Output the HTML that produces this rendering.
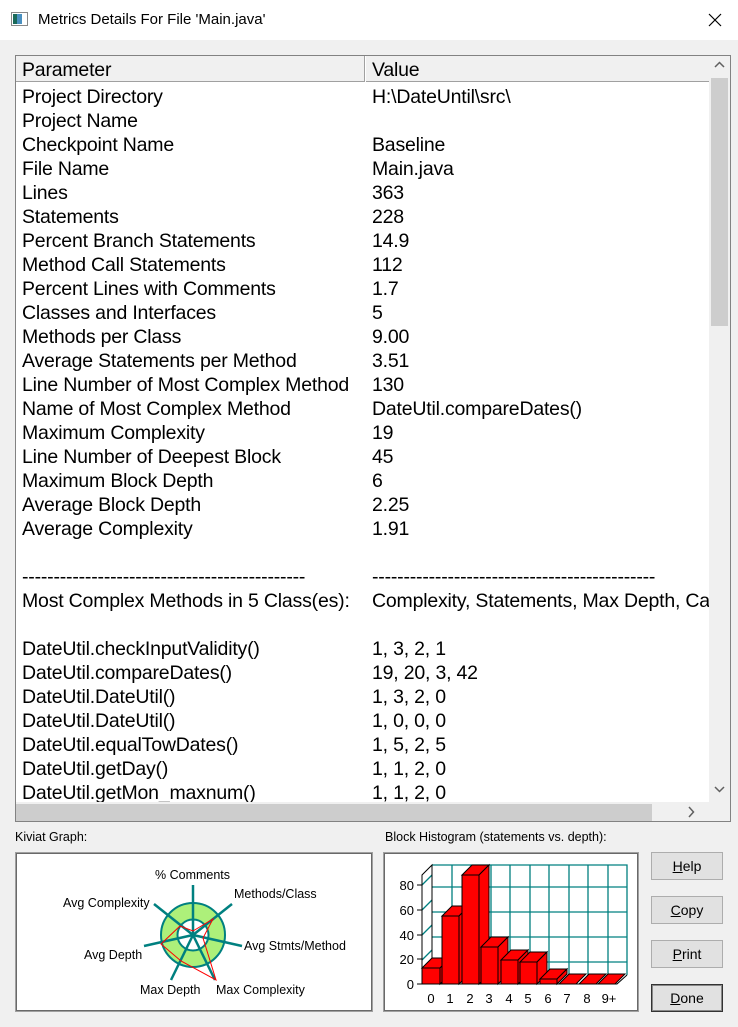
<!DOCTYPE html>
<html><head><meta charset="utf-8"><style>
*{margin:0;padding:0;box-sizing:border-box}
body{width:738px;height:1027px;background:#f0f0f0;font-family:"Liberation Sans",Arial,sans-serif;position:relative;overflow:hidden}
.title{position:absolute;left:0;top:0;width:738px;height:40px;background:#fff;font-size:15px}
.title .t{position:absolute;left:38px;top:11px}
.list{position:absolute;left:15px;top:55px;width:716px;height:767px;background:#fff;border:1px solid #828282;overflow:hidden}
.hdr{position:absolute;left:0;top:0;width:694px;height:26px;background:#f0f0f0;border-bottom:1px solid #a0a0a0}
.row{position:absolute;left:6px;font-size:19.5px;white-space:nowrap;color:#000;line-height:24px;letter-spacing:-0.2px}
.v{position:absolute;left:350px}
.vs{position:absolute;left:693px;top:0;width:21px;height:747px;background:#f0f0f0}
.hs{position:absolute;left:0;top:746px;width:693px;height:20px;background:#f0f0f0}
.lab{position:absolute;font-size:12.5px;color:#000}
.btn{position:absolute;left:651px;width:72px;height:28px;background:#e1e1e1;border:1px solid #adadad;font-size:14px;text-align:center;line-height:26px}
</style></head><body>
<div class="title">
<svg style="position:absolute;left:11px;top:12px" width="18" height="15"><rect x="0.5" y="0.5" width="16" height="13" fill="#fff" stroke="#888"/><rect x="2" y="2" width="4" height="10" fill="#1a6a5a"/><rect x="6" y="2" width="5" height="10" fill="#4a90c0"/></svg>
<span class="t">Metrics Details For File 'Main.java'</span>
<svg style="position:absolute;left:708px;top:13px" width="14" height="14"><path d="M1 1L13 13M13 1L1 13" stroke="#000" stroke-width="1.2"/></svg>
</div>
<div class="list">
<div class="hdr"><div style="position:absolute;left:348px;top:0;width:2px;height:26px;border-left:1px solid #a0a0a0;border-right:1px solid #fff"></div></div>
<div class="row" style="top:2px">Parameter<span class="v">Value</span></div>
<div class="row" style="top:29px">Project Directory<span class="v">H:\DateUntil\src\</span></div>
<div class="row" style="top:53px">Project Name</div>
<div class="row" style="top:77px">Checkpoint Name<span class="v">Baseline</span></div>
<div class="row" style="top:101px">File Name<span class="v">Main.java</span></div>
<div class="row" style="top:125px">Lines<span class="v">363</span></div>
<div class="row" style="top:149px">Statements<span class="v">228</span></div>
<div class="row" style="top:173px">Percent Branch Statements<span class="v">14.9</span></div>
<div class="row" style="top:197px">Method Call Statements<span class="v">112</span></div>
<div class="row" style="top:221px">Percent Lines with Comments<span class="v">1.7</span></div>
<div class="row" style="top:245px">Classes and Interfaces<span class="v">5</span></div>
<div class="row" style="top:269px">Methods per Class<span class="v">9.00</span></div>
<div class="row" style="top:293px">Average Statements per Method<span class="v">3.51</span></div>
<div class="row" style="top:317px">Line Number of Most Complex Method<span class="v">130</span></div>
<div class="row" style="top:341px">Name of Most Complex Method<span class="v">DateUtil.compareDates()</span></div>
<div class="row" style="top:365px">Maximum Complexity<span class="v">19</span></div>
<div class="row" style="top:389px">Line Number of Deepest Block<span class="v">45</span></div>
<div class="row" style="top:413px">Maximum Block Depth<span class="v">6</span></div>
<div class="row" style="top:437px">Average Block Depth<span class="v">2.25</span></div>
<div class="row" style="top:461px">Average Complexity<span class="v">1.91</span></div>
<div class="row" style="top:509px">---------------------------------------------<span class="v">---------------------------------------------</span></div>
<div class="row" style="top:533px">Most Complex Methods in 5 Class(es):<span class="v">Complexity, Statements, Max Depth, Calls</span></div>
<div class="row" style="top:581px">DateUtil.checkInputValidity()<span class="v">1, 3, 2, 1</span></div>
<div class="row" style="top:605px">DateUtil.compareDates()<span class="v">19, 20, 3, 42</span></div>
<div class="row" style="top:629px">DateUtil.DateUtil()<span class="v">1, 3, 2, 0</span></div>
<div class="row" style="top:653px">DateUtil.DateUtil()<span class="v">1, 0, 0, 0</span></div>
<div class="row" style="top:677px">DateUtil.equalTowDates()<span class="v">1, 5, 2, 5</span></div>
<div class="row" style="top:701px">DateUtil.getDay()<span class="v">1, 1, 2, 0</span></div>
<div class="row" style="top:725px">DateUtil.getMon_maxnum()<span class="v">1, 1, 2, 0</span></div>
<div class="vs"><div style="position:absolute;left:2px;top:22px;width:17px;height:248px;background:#cdcdcd"></div>
<svg style="position:absolute;left:5px;top:5px" width="11" height="8"><path d="M1 6L5.5 1.5L10 6" fill="none" stroke="#606060" stroke-width="1.5"/></svg>
<svg style="position:absolute;left:5px;top:729px" width="11" height="8"><path d="M1 2L5.5 6.5L10 2" fill="none" stroke="#606060" stroke-width="1.5"/></svg></div>
<div class="hs"><div style="position:absolute;left:0;top:2px;width:636px;height:18px;background:#cdcdcd"></div>
<svg style="position:absolute;left:671px;top:4px" width="8" height="12"><path d="M2 1L6.5 6L2 11" fill="none" stroke="#606060" stroke-width="1.5"/></svg></div>
<div style="position:absolute;left:693px;top:746px;width:21px;height:20px;background:#f0f0f0"></div>
</div>
<div class="lab" style="left:15px;top:830px">Kiviat Graph:</div>
<div class="lab" style="left:385px;top:830px">Block Histogram (statements vs. depth):</div>
<svg style="position:absolute;left:15px;top:852px" width="358" height="160">
<rect x="0.5" y="0.5" width="357" height="159" fill="#fff" stroke="#a0a0a0"/>
<rect x="1.5" y="1.5" width="355" height="157" fill="none" stroke="#696969"/>
<g transform="translate(178,83)">
<circle r="24" fill="none" stroke="#adf07a" stroke-width="17"/>
<circle r="32" fill="none" stroke="#008080" stroke-width="2"/>
<circle r="15.5" fill="none" stroke="#008080" stroke-width="2"/>
<g stroke="#008080" stroke-width="2.5">
<line x1="0" y1="0" x2="0" y2="-50"/>
<line x1="0" y1="0" x2="39" y2="-31"/>
<line x1="0" y1="0" x2="49" y2="11"/>
<line x1="0" y1="0" x2="22" y2="45"/>
<line x1="0" y1="0" x2="-22" y2="45"/>
<line x1="0" y1="0" x2="-49" y2="11"/>
<line x1="0" y1="0" x2="-39" y2="-31"/>
</g>
<path d="M0 -4L20 -16L10 3L23 45L-12 26L-32 9L-13 -9Z" fill="none" stroke="#f00" stroke-width="1"/>
</g>
<g font-size="12.5" font-family="Liberation Sans,Arial,sans-serif">
<text x="140" y="27">% Comments</text>
<text x="219" y="46">Methods/Class</text>
<text x="48" y="55">Avg Complexity</text>
<text x="229" y="98">Avg Stmts/Method</text>
<text x="69" y="107">Avg Depth</text>
<text x="125" y="142">Max Depth</text>
<text x="201" y="142">Max Complexity</text>
</g>
</svg>
<svg style="position:absolute;left:383px;top:852px" width="256" height="160">
<rect x="0.5" y="0.5" width="255" height="159" fill="#fff" stroke="#a0a0a0"/>
<rect x="1.5" y="1.5" width="253" height="157" fill="none" stroke="#696969"/>
<g transform="translate(-383,-852)">
<g stroke="#008080" stroke-width="1.3" fill="none">
<path d="M432 865H627V975M432 887H627M432 912H627M432 937H627M432 962H627"/>
<path d="M452 865V975M471 865V975M491 865V975M510 865V975M530 865V975M549 865V975M569 865V975M588 865V975M608 865V975"/>
<path d="M422 885L432 875M422 910L432 900M422 935L432 925M422 960L432 950"/>
</g>
<path d="M422 984V875L432 865V975M422 984H617L627 975" fill="none" stroke="#000"/>
<g stroke="#000" stroke-width="1" fill="#f00">
<path d="M422 968h18l10-10h-18z"/><path d="M440 968l10-10v16l-10 10z"/><rect x="422" y="968" width="18" height="16"/>
<path d="M442 916h17l10-10h-17z"/><path d="M459 916l10-10v68l-10 10z"/><rect x="442" y="916" width="17" height="68"/>
<path d="M462 875h17l10-10h-17z"/><path d="M479 875l10-10v109l-10 10z"/><rect x="462" y="875" width="17" height="109"/>
<path d="M481 947h17l10-10h-17z"/><path d="M498 947l10-10v37l-10 10z"/><rect x="481" y="947" width="17" height="37"/>
<path d="M501 960h17l10-10h-17z"/><path d="M518 960l10-10v24l-10 10z"/><rect x="501" y="960" width="17" height="24"/>
<path d="M520 962h17l10-10h-17z"/><path d="M537 962l10-10v22l-10 10z"/><rect x="520" y="962" width="17" height="22"/>
<path d="M540 979h17l10-10h-17z"/><path d="M557 979l10-10v5l-10 10z"/><rect x="540" y="979" width="17" height="5"/>
<path d="M559 984h17l10-10h-17z"/><path d="M579 984h17l10-10h-17z"/><path d="M598 984h17l10-10h-17z"/>
</g>
<g stroke="#000"><path d="M417 984h5M417 959h5M417 935h5M417 910h5M417 885h5"/></g>
<g font-size="13" font-family="Liberation Sans,Arial,sans-serif" text-anchor="end">
<text x="414" y="989">0</text><text x="414" y="964">20</text><text x="414" y="940">40</text><text x="414" y="915">60</text><text x="414" y="890">80</text>
</g>
<g font-size="13" font-family="Liberation Sans,Arial,sans-serif" text-anchor="middle">
<text x="431" y="1003">0</text><text x="450" y="1003">1</text><text x="470" y="1003">2</text><text x="489" y="1003">3</text><text x="509" y="1003">4</text><text x="528" y="1003">5</text><text x="548" y="1003">6</text><text x="567" y="1003">7</text><text x="587" y="1003">8</text><text x="609" y="1003">9+</text>
</g>
</g>
</svg>
<div class="btn" style="top:852px"><u>H</u>elp</div>
<div class="btn" style="top:896px"><u>C</u>opy</div>
<div class="btn" style="top:940px"><u>P</u>rint</div>
<div class="btn" style="top:984px;border:1px solid #333;box-shadow:inset 0 0 0 1px #888"><u>D</u>one</div>
</body></html>
